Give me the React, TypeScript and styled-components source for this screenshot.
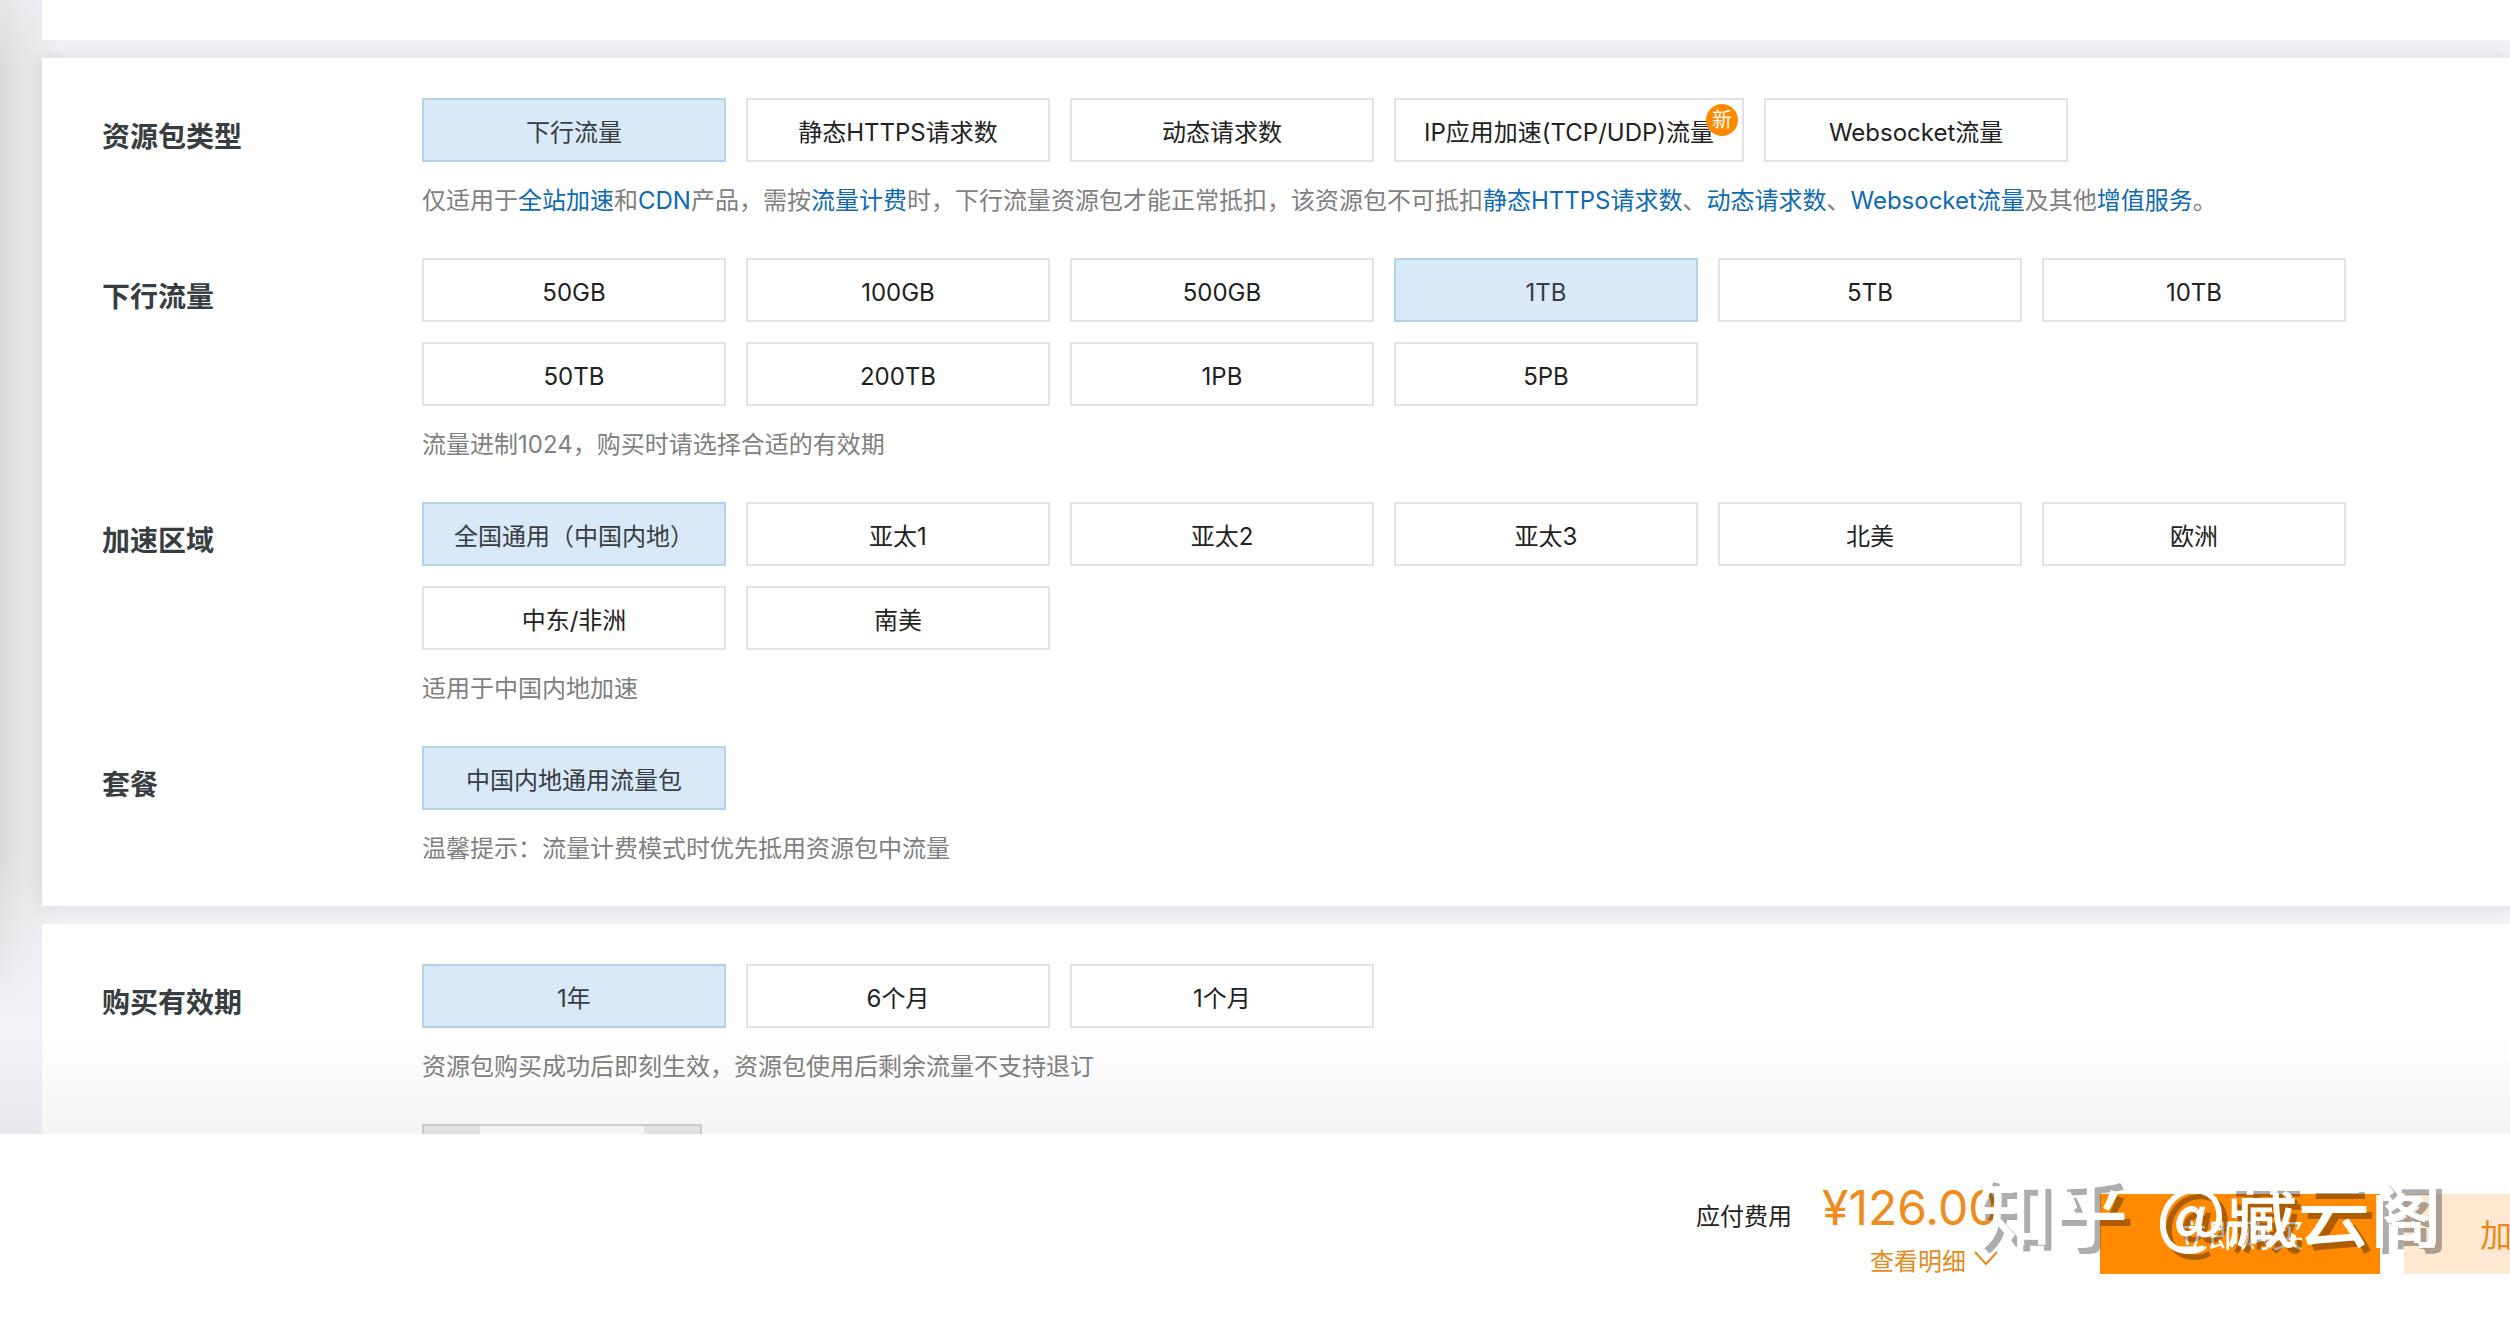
import React, { useState } from "react";
import styled, { createGlobalStyle } from "styled-components";

const GlobalStyle = createGlobalStyle`
  *, *::before, *::after { box-sizing: border-box; }
  body {
    margin: 0;
    background: #f0f2f5;
    color: #222;
    font-family: Inter, "Noto Sans CJK SC", sans-serif;
    font-size: 24px;
    line-height: 36px;
  }
  button, input { font: inherit; color: inherit; }
`;

const Page = styled.div`
  position: relative;
  display: flex;
  flex-direction: column;
  height: 100vh;
  overflow: hidden;
`;

const Content = styled.main`
  flex: 1;
  min-height: 0;
  overflow: hidden;
  padding-left: 42px;
  background:
    linear-gradient(to bottom, rgba(240, 242, 245, 0.5) 0, rgba(240, 242, 245, 0) 6%, rgba(240, 242, 245, 0) 75%, #f0f2f5 90%),
    linear-gradient(to right, #d8d9db 0, #e3e4e6 20px, #e8e9eb 42px, #f0f2f5 64px);
`;

const Panel = styled.section<{ $shadow?: boolean }>`
  position: relative;
  padding: 40px 0 0 60px;
  margin-bottom: 18px;
  background: #fff;
  z-index: ${(p) => (p.$shadow ? 1 : 0)};
  box-shadow: ${(p) => (p.$shadow ? "0 0 16px rgba(0, 0, 0, 0.1)" : "none")};
`;

const PreviousPanel = styled.div`
  position: relative;
  z-index: 2;
  height: 40px;
  margin-bottom: 18px;
  background: #fff;
`;

const Row = styled.div`
  display: grid;
  grid-template-columns: 320px minmax(0, 1fr);
  padding-bottom: 39px;
`;

const RowLabel = styled.h2`
  margin: 0;
  padding-top: 21px;
  font-size: 28px;
  line-height: 36px;
  font-weight: 700;
  color: #373d41;
`;

const Options = styled.div`
  display: flex;
  flex-wrap: wrap;
  gap: 20px;
  max-width: 1960px;
`;

const Option = styled.button<{ $selected: boolean }>`
  position: relative;
  min-width: 304px;
  height: 64px;
  padding: 6px 28px 0;
  border: 2px solid ${(p) => (p.$selected ? "#b3d2e6" : "#e2e2e2")};
  border-radius: 0;
  background: ${(p) => (p.$selected ? "#d9e9f8" : "#fff")};
  color: ${(p) => (p.$selected ? "#373d41" : "#222")};
  white-space: nowrap;
  cursor: pointer;
`;

const NewBadge = styled.span`
  position: absolute;
  top: 4px;
  right: 4px;
  width: 32px;
  height: 32px;
  border-radius: 50%;
  background: #ff8a00;
  color: #fff;
  font-size: 20px;
  line-height: 32px;
  text-align: center;
`;

const Hint = styled.p`
  margin: 21px 0 0;
  color: #808080;
`;

const HintLink = styled.a`
  color: #0f6ab4;
  text-decoration: none;
`;

const Stepper = styled.div`
  display: flex;
  width: 280px;
  height: 64px;
  border: 2px solid #d3d3d3;
`;

const StepButton = styled.button`
  width: 56px;
  padding: 0;
  border: 0;
  background: #ececec;
`;

const StepInput = styled.input`
  flex: 1;
  min-width: 0;
  padding: 0;
  border: 0;
  background: #fff;
  text-align: center;
`;

const CheckoutBar = styled.footer`
  position: relative;
  z-index: 2;
  display: flex;
  justify-content: flex-end;
  align-items: flex-start;
  flex: none;
  height: 188px;
  padding-top: 44px;
  background: #fff;

  &::before {
    content: "";
    position: absolute;
    left: 0;
    right: 0;
    bottom: 100%;
    height: 100px;
    background: linear-gradient(to top, rgba(0, 0, 0, 0.045), rgba(0, 0, 0, 0.025) 40%, rgba(0, 0, 0, 0));
    pointer-events: none;
  }
`;

const PriceLabel = styled.span`
  padding-top: 21px;
  margin-right: 30px;
`;

const PriceBlock = styled.div`
  display: flex;
  flex-direction: column;
  align-items: flex-end;
  width: 176px;
  margin-right: 102px;
  color: #f08c1e;
`;

const Price = styled.strong`
  align-self: flex-start;
  font-size: 48px;
  line-height: 60px;
  font-weight: 400;
`;

const DetailButton = styled.button`
  display: flex;
  align-items: center;
  gap: 8px;
  padding: 0;
  border: 0;
  background: none;
  color: #e8891c;
  white-space: nowrap;
  margin-top: 6px;
`;

const Action = styled.button<{ $primary?: boolean }>`
  flex: none;
  width: 280px;
  height: 80px;
  margin-top: 16px;
  margin-right: ${(p) => (p.$primary ? "24px" : "-174px")};
  padding: 4px 0 0;
  border: 0;
  background: ${(p) => (p.$primary ? "#ff8a00" : "#ffe8d1")};
  color: ${(p) => (p.$primary ? "#fff" : "#e8891c")};
  font-size: 32px;
`;

const Watermark = styled.div`
  position: absolute;
  z-index: 3;
  right: 68px;
  bottom: 62px;
  display: flex;
  align-items: baseline;
  gap: 28px;
  color: #fff;
  font-family: "Noto Sans CJK SC", sans-serif;
  font-size: 72px;
  line-height: 100px;
  font-weight: 500;
  text-shadow: 6px 6px 0 rgba(0, 0, 0, 0.32);
  white-space: nowrap;
  pointer-events: none;
`;

const WatermarkSite = styled.span`
  font-size: 76px;
`;

type Choice = { name: string; fresh?: boolean };

const types: Choice[] = [
  { name: "下行流量" },
  { name: "静态HTTPS请求数" },
  { name: "动态请求数" },
  { name: "IP应用加速(TCP/UDP)流量", fresh: true },
  { name: "Websocket流量" },
];
const volumes: Choice[] = ["50GB", "100GB", "500GB", "1TB", "5TB", "10TB", "50TB", "200TB", "1PB", "5PB"].map((name) => ({ name }));
const regions: Choice[] = ["全国通用（中国内地）", "亚太1", "亚太2", "亚太3", "北美", "欧洲", "中东/非洲", "南美"].map((name) => ({ name }));
const plans: Choice[] = [{ name: "中国内地通用流量包" }];
const periods: Choice[] = [{ name: "1年" }, { name: "6个月" }, { name: "1个月" }];

type OptionRowProps = {
  label: string;
  choices: Choice[];
  initial: string;
  children: React.ReactNode;
};

function OptionRow({ label, choices, initial, children }: OptionRowProps) {
  const [selected, setSelected] = useState(initial);
  return (
    <Row>
      <RowLabel id={label}>{label}</RowLabel>
      <div>
        <Options role="group" aria-labelledby={label}>
          {choices.map((c) => (
            <Option
              key={c.name}
              type="button"
              $selected={c.name === selected}
              aria-pressed={c.name === selected}
              onClick={() => setSelected(c.name)}
            >
              {c.name}
              {c.fresh && <NewBadge>新</NewBadge>}
            </Option>
          ))}
        </Options>
        <Hint>{children}</Hint>
      </div>
    </Row>
  );
}

export default function App() {
  const [count, setCount] = useState(1);
  return (
    <Page>
      <GlobalStyle />
      <Content>
        <PreviousPanel />
        <Panel $shadow>
          <OptionRow label="资源包类型" choices={types} initial="下行流量">
            仅适用于<HintLink href="#dcdn">全站加速</HintLink>和<HintLink href="#cdn">CDN</HintLink>产品，需按
            <HintLink href="#billing">流量计费</HintLink>时，下行流量资源包才能正常抵扣，该资源包不可抵扣
            <HintLink href="#https">静态HTTPS请求数</HintLink>、<HintLink href="#dynamic">动态请求数</HintLink>、
            <HintLink href="#websocket">Websocket流量</HintLink>及其他<HintLink href="#services">增值服务</HintLink>。
          </OptionRow>
          <OptionRow label="下行流量" choices={volumes} initial="1TB">
            流量进制1024，购买时请选择合适的有效期
          </OptionRow>
          <OptionRow label="加速区域" choices={regions} initial="全国通用（中国内地）">
            适用于中国内地加速
          </OptionRow>
          <OptionRow label="套餐" choices={plans} initial="中国内地通用流量包">
            温馨提示：流量计费模式时优先抵用资源包中流量
          </OptionRow>
        </Panel>
        <Panel>
          <OptionRow label="购买有效期" choices={periods} initial="1年">
            资源包购买成功后即刻生效，资源包使用后剩余流量不支持退订
          </OptionRow>
          <Row>
            <span />
            <Stepper>
              <StepButton type="button" aria-label="减少" onClick={() => setCount(Math.max(1, count - 1))} />
              <StepInput aria-label="购买数量" value={count} onChange={(e) => setCount(Number(e.target.value) || 1)} />
              <StepButton type="button" aria-label="增加" onClick={() => setCount(count + 1)} />
            </Stepper>
          </Row>
        </Panel>
      </Content>
      <CheckoutBar>
        <PriceLabel>应付费用</PriceLabel>
        <PriceBlock>
          <Price>¥126.00</Price>
          <DetailButton type="button">
            查看明细
            <svg width="24" height="24" viewBox="0 0 24 24" fill="none" stroke="currentColor" strokeWidth="2" aria-hidden="true">
              <path d="M1 2l11 12L23 2" />
            </svg>
          </DetailButton>
        </PriceBlock>
        <Action type="button" $primary>立即购买</Action>
        <Action type="button">加入清单</Action>
      </CheckoutBar>
      <Watermark>
        <WatermarkSite>知乎</WatermarkSite>
        <span>@藏云阁</span>
      </Watermark>
    </Page>
  );
}
